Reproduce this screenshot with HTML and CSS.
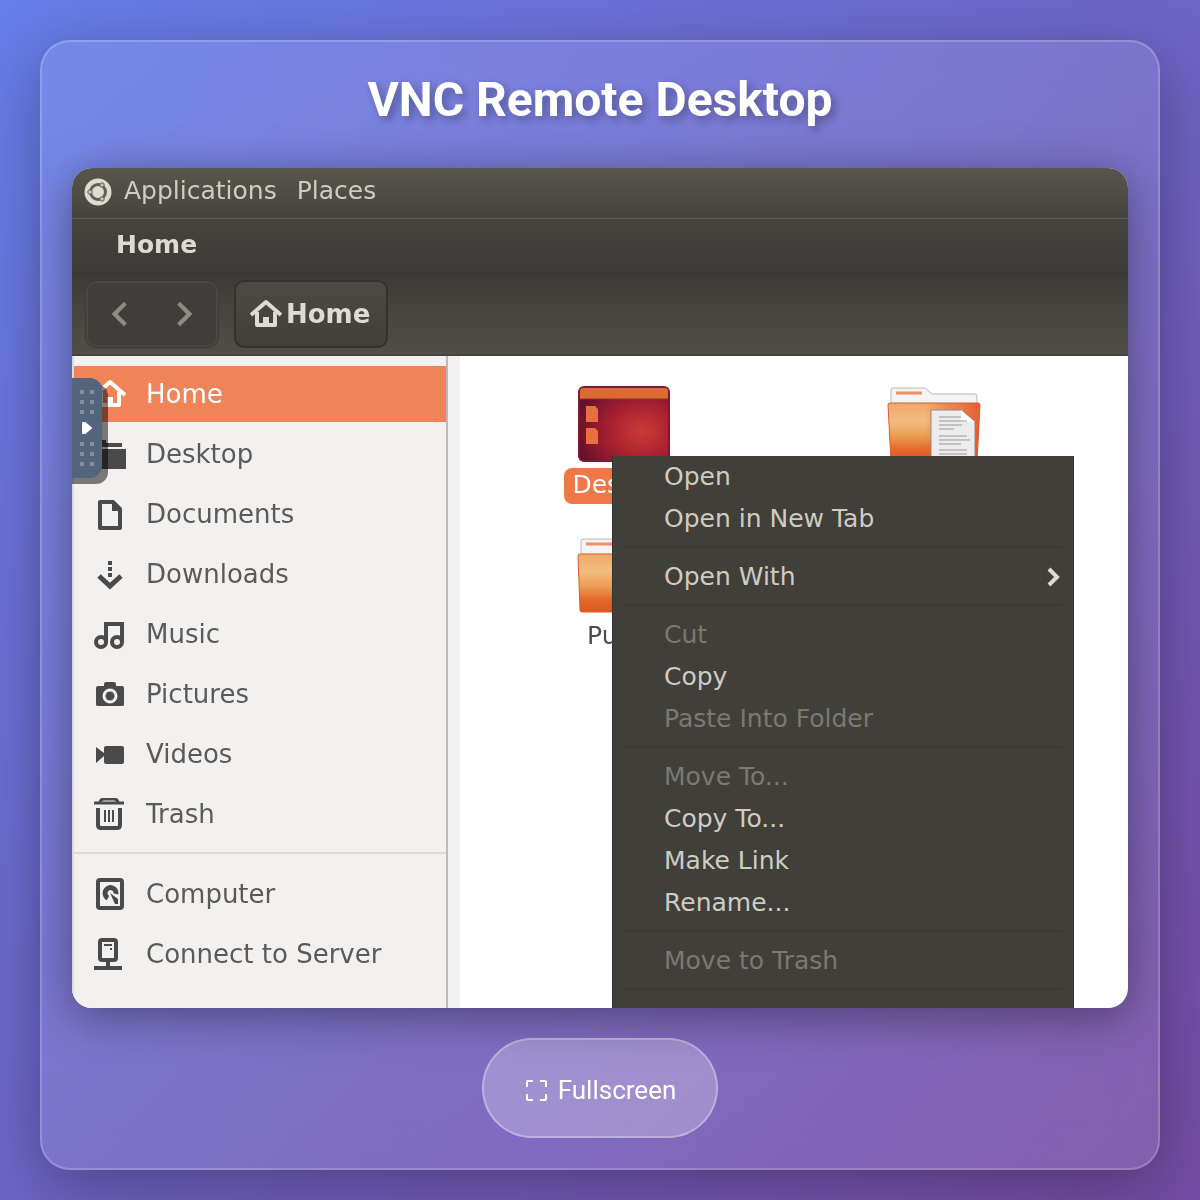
FILE: index.html
```html
<!DOCTYPE html>
<html lang="en">
<head>
    <meta charset="UTF-8">
    <meta name="viewport" content="width=device-width, initial-scale=1.0">
    <title>VNC Remote Desktop</title>
    <link rel="stylesheet" href="styles.css">
</head>
<body>

    <div class="container">
        <h1>VNC Remote Desktop</h1>

        <div class="screen" id="screen">
            <nav class="panel">
                <svg class="logo" viewBox="0 0 28 28">
                    <circle cx="14" cy="14" r="13.5" fill="#dfdbd2"/>
                    <circle cx="14" cy="14" r="7.500" fill="#dfdbd2" stroke="#615e56" stroke-width="3"/>
                    <path d="M14 14H3M14 14l5.500-9.500M14 14l5.500 9.500" stroke="#dfdbd2" stroke-width="2"/>
                    <g fill="#c9c6bc" stroke="#615e56" stroke-width="1">
                        <circle cx="6" cy="14" r="2.200"/>
                        <circle cx="18" cy="7" r="2.200"/>
                        <circle cx="18" cy="21" r="2.200"/>
                    </g>
                </svg>
                <button type="button">Applications</button>
                <button type="button">Places</button>
            </nav>

            <div class="titleBar">Home</div>

            <div class="toolbar">
                <div class="navButtons">
                    <button type="button" aria-label="Back">
                        <svg viewBox="0 0 28 28"><path d="M19 4L9 14l10 10" fill="none" stroke="#8d8b82" stroke-width="4"/></svg>
                    </button>
                    <button type="button" aria-label="Forward">
                        <svg viewBox="0 0 28 28"><path d="M9 4l10 10L9 24" fill="none" stroke="#8d8b82" stroke-width="4"/></svg>
                    </button>
                </div>
                <button type="button" class="pathButton">
                    <svg viewBox="0 0 32 32">
                        <path d="M1 17L16 4l15 13M7 14v13h18V14" fill="none" stroke="#dfdbd2" stroke-width="4" stroke-linejoin="round"/>
                        <path d="M13 19h6v9h-6z" fill="#dfdbd2"/>
                    </svg>
                    Home
                </button>
            </div>

            <div class="files">
                <div class="sidebar">
                    <a href="#" class="place active">
                        <svg viewBox="0 0 32 32">
                            <path d="M1 17L16 4l15 13M7 14v13h18V14" fill="none" stroke="currentColor" stroke-width="4" stroke-linejoin="round"/>
                            <path d="M13 19h6v9h-6z" fill="currentColor"/>
                        </svg>
                        Home
                    </a>
                    <a href="#" class="place">
                        <svg viewBox="0 0 32 32"><path d="M2 2h10v3h16v4H2zM1 11h31v20H1z" fill="currentColor"/></svg>
                        Desktop
                    </a>
                    <a href="#" class="place">
                        <svg viewBox="0 0 32 32">
                            <path d="M6 4h13l7 7v19H6z" fill="none" stroke="currentColor" stroke-width="4" stroke-linejoin="round"/>
                            <path d="M18 4v9h9z" fill="currentColor"/>
                        </svg>
                        Documents
                    </a>
                    <a href="#" class="place">
                        <svg viewBox="0 0 32 32">
                            <path d="M14 3h4v4h-4zM14 9h4v4h-4zM14 15h4v4h-4z" fill="currentColor"/>
                            <path d="M5 18l11 10 11-10" fill="none" stroke="currentColor" stroke-width="5"/>
                        </svg>
                        Downloads
                    </a>
                    <a href="#" class="place">
                        <svg viewBox="0 0 32 32">
                            <path d="M12 24V6h16v18" fill="none" stroke="currentColor" stroke-width="4"/>
                            <circle cx="7" cy="24" r="5" fill="none" stroke="currentColor" stroke-width="4"/>
                            <circle cx="23" cy="24" r="5" fill="none" stroke="currentColor" stroke-width="4"/>
                        </svg>
                        Music
                    </a>
                    <a href="#" class="place">
                        <svg viewBox="0 0 32 32">
                            <path d="M4 8h6V6q0-2 2-2h8q2 0 2 2v2h6q2 0 2 2v17q0 1-2 1H4q-2 0-2-1V10q0-2 2-2z" fill="currentColor"/>
                            <circle cx="16" cy="18" r="6" fill="none" stroke="#f2f1f0" stroke-width="3"/>
                        </svg>
                        Pictures
                    </a>
                    <a href="#" class="place">
                        <svg viewBox="0 0 32 32">
                            <path d="M2 9l8 6v3l-8 7z" fill="currentColor"/>
                            <rect x="10" y="8" width="20" height="18" rx="2" fill="currentColor"/>
                        </svg>
                        Videos
                    </a>
                    <a href="#" class="place">
                        <svg viewBox="0 0 32 32">
                            <path d="M0 5h30M6 4q1-3 4-3h10q3 0 4 3" fill="none" stroke="currentColor" stroke-width="3"/>
                            <path d="M4 10v17q0 3 3 3h16q3 0 3-3V10" fill="none" stroke="currentColor" stroke-width="4"/>
                            <path d="M11 12v12M15 12v12M19 12v12" stroke="currentColor" stroke-width="2"/>
                        </svg>
                        Trash
                    </a>
                    <hr>
                    <a href="#" class="place">
                        <svg viewBox="0 0 32 32">
                            <rect x="4" y="2" width="24" height="28" rx="2" fill="none" stroke="currentColor" stroke-width="4"/>
                            <path d="M14 20a5.500 5.500 0 1 1 8-4" fill="none" stroke="currentColor" stroke-width="5"/>
                            <path d="M16 15l8 6v5h-3z" fill="currentColor"/>
                        </svg>
                        Computer
                    </a>
                    <a href="#" class="place">
                        <svg viewBox="0 0 32 32">
                            <rect x="6" y="2" width="16" height="20" rx="2" fill="none" stroke="currentColor" stroke-width="4"/>
                            <path d="M0 30h28M14 22v7" stroke="currentColor" stroke-width="4"/>
                            <path d="M10 7h8M16 11h2" stroke="currentColor" stroke-width="2"/>
                        </svg>
                        Connect to Server
                    </a>
                </div>

                <div class="iconView">
                    <button type="button" class="file selected">
                        <svg viewBox="0 0 96 80">
                            <defs>
                                <radialGradient id="wallpaper" cx="70%" cy="60%" r="75%">
                                    <stop offset="0" stop-color="#cb3b35"/>
                                    <stop offset="0.500" stop-color="#a72030"/>
                                    <stop offset="1" stop-color="#64102b"/>
                                </radialGradient>
                            </defs>
                            <rect x="3" y="3" width="90" height="74" rx="5" fill="url(#wallpaper)" stroke="#7d1930" stroke-width="2"/>
                            <path d="M4 15V7q0-3 3-3h82q3 0 3 3v8z" fill="#dc6a36"/>
                            <path d="M4 15h88" stroke="#963021"/>
                            <path d="M10 22h9l3 3v13H10zM10 44h9l3 3v13H10z" fill="#e8703e"/>
                        </svg>
                        <span>Desktop</span>
                    </button>
                    <button type="button" class="file" aria-label="Documents">
                        <svg viewBox="0 0 96 80">
                            <defs>
                                <linearGradient id="folder" x1="0" y1="0" x2="0" y2="1">
                                    <stop offset="0" stop-color="#f0a868"/>
                                    <stop offset="0.300" stop-color="#f2bd80"/>
                                    <stop offset="0.550" stop-color="#ec9e55"/>
                                    <stop offset="0.800" stop-color="#e5662a"/>
                                    <stop offset="1" stop-color="#d8591c"/>
                                </linearGradient>
                                <linearGradient id="shade" x1="0" y1="0" x2="1" y2="0">
                                    <stop offset="0.400" stop-color="#e2542c" stop-opacity="0"/>
                                    <stop offset="1" stop-color="#e2542c" stop-opacity="0.900"/>
                                </linearGradient>
                            </defs>
                            <path d="M5 26V6q0-2 2-2h32l7 6h43q2 0 2 2v14z" fill="#f4f4f4" stroke="#b9b9b9"/>
                            <path d="M10 9h26" stroke="#f0905f" stroke-width="3"/>
                            <path d="M2 21q0-2 2-2h88q2 0 2 2l-3 57H5z" fill="url(#folder)" stroke="#d9602d"/>
                            <path d="M2 21q0-2 2-2h88q2 0 2 2l-3 57H5z" fill="url(#shade)"/>
                            <path d="M45 80V26h30l14 12v42z" fill="#ececec" stroke="#8b8b8b"/>
                            <path d="M75 26v12h14z" fill="#fff"/>
                            <path d="M53 33h22M53 37h28M53 41h23M53 45h15M53 52h28M53 56h31M53 60h22M53 66h28M53 70h28" stroke="#999"/>
                        </svg>
                    </button>
                    <button type="button" class="file">
                        <svg viewBox="0 0 96 80">
                            <path d="M5 26V6q0-2 2-2h32l7 6h43q2 0 2 2v14z" fill="#f4f4f4" stroke="#b9b9b9"/>
                            <path d="M10 9h26" stroke="#f0905f" stroke-width="3"/>
                            <path d="M2 21q0-2 2-2h88q2 0 2 2l-3 54q0 2-2 2H6q-2 0-2-2z" fill="url(#folder)" stroke="#d9602d"/>
                            <path d="M2 21q0-2 2-2h88q2 0 2 2l-3 54q0 2-2 2H6q-2 0-2-2z" fill="url(#shade)"/>
                        </svg>
                        <span>Public</span>
                    </button>

                    <div class="contextMenu">
                        <button type="button">Open</button>
                        <button type="button">Open in New Tab</button>
                        <hr>
                        <button type="button">Open With
                            <svg viewBox="0 0 20 20"><path d="M4 2l8 8-8 8" fill="none" stroke="#dfdbd2" stroke-width="4"/></svg>
                        </button>
                        <hr>
                        <button type="button" disabled>Cut</button>
                        <button type="button">Copy</button>
                        <button type="button" disabled>Paste Into Folder</button>
                        <hr>
                        <button type="button" disabled>Move To...</button>
                        <button type="button">Copy To...</button>
                        <button type="button">Make Link</button>
                        <button type="button">Rename...</button>
                        <hr>
                        <button type="button" disabled>Move to Trash</button>
                        <hr>
                    </div>
                </div>
            </div>

            <button type="button" class="handle" aria-label="Show control bar">
                <svg viewBox="0 0 30 100">
                    <path d="M8 12h4v4H8zM18 12h4v4h-4zM8 22h4v4H8zM18 22h4v4h-4zM8 32h4v4H8zM18 32h4v4h-4zM8 64h4v4H8zM18 64h4v4h-4zM8 74h4v4H8zM18 74h4v4h-4zM8 84h4v4H8zM18 84h4v4h-4z" fill="#8290a1"/>
                    <path d="M11 45h2l6 5-6 5h-2z" fill="#fff" stroke="#fff" stroke-width="2" stroke-linejoin="round"/>
                </svg>
            </button>
        </div>

        <button type="button" class="fullscreen" onclick="toggleFullscreen()">
            <svg viewBox="0 0 24 24"><path d="M3 9V4q0-1 1-1h5M16 3h5q1 0 1 1v5M22 16v5q0 1-1 1h-5M9 22H4q-1 0-1-1v-5" fill="none" stroke="#fff" stroke-width="2"/></svg>
            Fullscreen
        </button>
    </div>

    <script>

        function toggleFullscreen () {
            const screen = document.getElementById('screen');

            if ( document.fullscreenElement ) {
                document.exitFullscreen();
            } else {
                screen.requestFullscreen();
            }
        }

    </script>
</body>
</html>
```

FILE: styles.css
```css
* {
    margin: 0;
    padding: 0;
    box-sizing: border-box;
}

body {
    min-height: 100vh;
    padding: 40px 40px 30px;
    background: linear-gradient(135deg, #667eea 0%, #764ba2 100%);
    font-family: Roboto, sans-serif;
}

button {
    border: none;
    background: none;
    color: inherit;
    font: inherit;
    cursor: pointer;
}

svg {
    display: block;
    flex-shrink: 0;
}

.container {
    display: flex;
    flex-direction: column;
    align-items: center;
    padding: 30px;
    background: rgba(255, 255, 255, 0.1);
    border: 2px solid rgba(255, 255, 255, 0.2);
    border-radius: 30px;
    box-shadow: 0 16px 64px rgba(0, 0, 0, 0.3);
    backdrop-filter: blur(20px);
}

.container h1 {
    margin-bottom: 40px;
    color: white;
    font-size: 48px;
    line-height: 56px;
    text-align: center;
    text-shadow: 4px 4px 8px rgba(0, 0, 0, 0.3);
}

/* remote screen */

.screen {
    position: relative;
    display: flex;
    flex-direction: column;
    width: 100%;
    height: 70vh;
    margin-bottom: 30px;
    overflow: hidden;
    background: white;
    border-radius: 20px;
    box-shadow: 0 8px 48px rgba(0, 0, 0, 0.4);
    color: #dfdbd2;
    font-family: "DejaVu Sans", sans-serif;
    font-size: 25px;
    line-height: 30px;
}

.panel {
    display: flex;
    flex-shrink: 0;
    align-items: center;
    gap: 20px;
    height: 51px;
    padding: 0 12px 4px;
    background: linear-gradient(#58564d, #45443e);
    border-bottom: 1px solid #5c5b54;
    color: #cfccc3;
}

.logo {
    width: 28px;
    margin: 2px -8px 0 0;
}

.titleBar {
    flex-shrink: 0;
    height: 56px;
    padding: 11px 44px;
    background: linear-gradient(#45443f, #3b3a36);
    font-weight: bold;
}

.toolbar {
    display: flex;
    flex-shrink: 0;
    align-items: center;
    gap: 16px;
    height: 81px;
    padding: 0 14px 2px;
    background: linear-gradient(#3c3b37, #504f47);
    border-top: 1px solid #383733;
    border-bottom: 2px solid #44433d;
}

.navButtons {
    display: flex;
    height: 66px;
    border: 2px solid #494842;
    border-radius: 10px;
    background: #3f3e3a;
    outline: 1px solid #3a3935;
}

.navButtons button {
    padding: 0 17px;
}

.navButtons svg {
    width: 30px;
}

.pathButton {
    display: flex;
    align-items: center;
    gap: 4px;
    height: 68px;
    padding: 0 16px 0 14px;
    background: linear-gradient(#4b4a43, #403f3a);
    border: 2px solid #32312d;
    border-radius: 10px;
    font-size: 26px;
    font-weight: bold;
}

.pathButton svg {
    width: 32px;
}

.files {
    display: flex;
    flex: 1;
    min-height: 0;
    color: #4c4c4c;
}

.sidebar {
    width: 376px;
    flex-shrink: 0;
    padding-top: 10px;
    background: #f2f1f0;
    border-left: 2px solid #dcdad8;
    border-right: 2px solid #bdbbb9;
    font-size: 26px;
}

.place {
    display: flex;
    align-items: center;
    gap: 20px;
    height: 56px;
    margin-bottom: 4px;
    padding: 0 20px;
    color: #5a5a5a;
    text-decoration: none;
}

.place svg {
    width: 32px;
    color: #4a4a4a;
}

.place.active,
.place.active svg {
    background: #f08458;
    color: white;
}

.sidebar hr {
    margin: 10px 0 12px;
    border: none;
    border-top: 2px solid #dddbd9;
}

.iconView {
    position: relative;
    display: flex;
    flex: 1;
    flex-wrap: wrap;
    align-content: flex-start;
    padding: 28px 0 0 9px;
    border-left: 12px solid #f2f1f0;
}

.file {
    display: flex;
    flex-direction: column;
    align-items: center;
    gap: 4px;
    width: 310px;
    height: 151px;
}

.file svg {
    width: 96px;
}

.file span {
    padding: 2px 8px 4px;
    border-radius: 8px;
}

.file.selected span {
    background: #f07746;
    color: white;
}

/* right click menu, runs past the bottom of the screen */

.contextMenu {
    position: absolute;
    top: 100px;
    bottom: 0;
    left: 152px;
    width: 462px;
    background: #403f3a;
    border: 1px solid #353430;
    border-width: 0 1px;
    color: #cfccc3;
}

.contextMenu button {
    display: flex;
    align-items: center;
    justify-content: space-between;
    width: 100%;
    height: 42px;
    padding: 0 8px 0 51px;
    cursor: default;
}

.contextMenu button:disabled {
    color: #7b7972;
}

.contextMenu svg {
    width: 20px;
}

.contextMenu hr {
    margin: 6px 11px 8px;
    border: none;
    border-top: 2px solid #3a3935;
}

.handle {
    position: absolute;
    top: 210px;
    left: -10px;
    padding-left: 10px;
    background: #53657c;
    border-radius: 0 12px 12px 0;
    box-shadow: 6px 6px 0 rgba(0, 0, 0, 0.5);
}

.handle svg {
    width: 30px;
}

.fullscreen {
    display: flex;
    align-items: center;
    gap: 10px;
    height: 100px;
    padding: 4px 40px 0;
    background: rgba(255, 255, 255, 0.25);
    border: 2px solid rgba(255, 255, 255, 0.3);
    border-radius: 50px;
    color: white;
    font-size: 26px;
}

.fullscreen svg {
    width: 24px;
}
```
